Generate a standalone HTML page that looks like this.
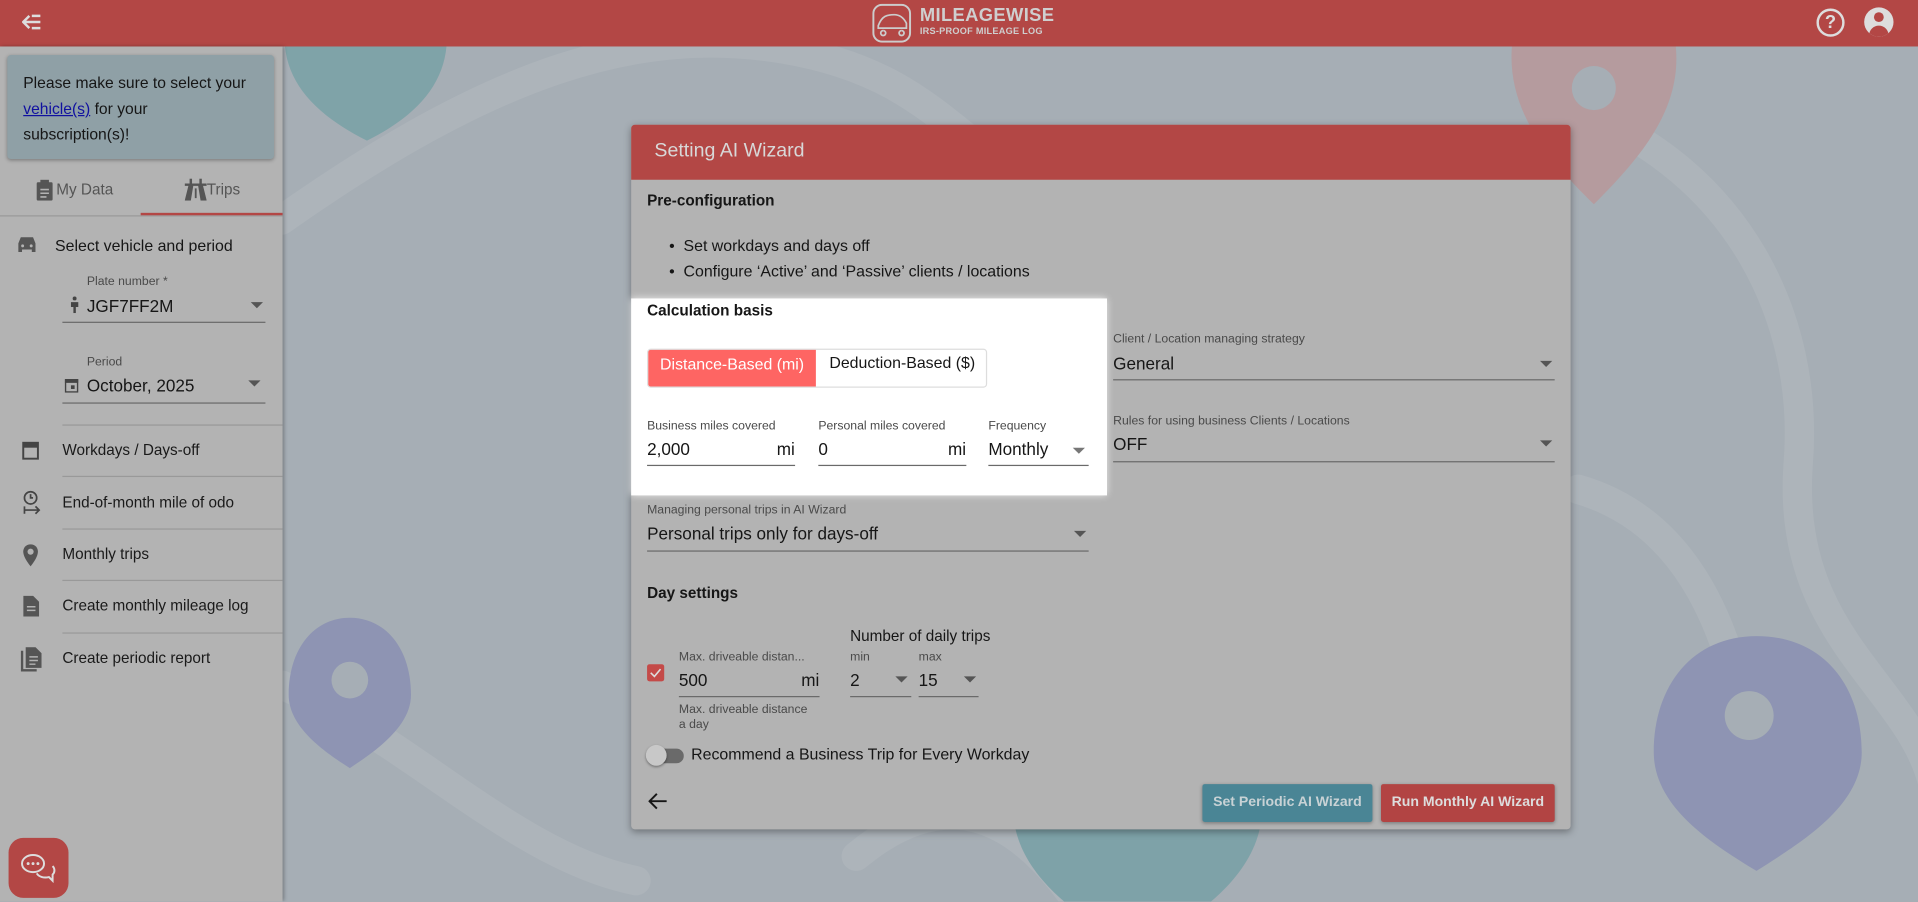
<!DOCTYPE html>
<html><head><meta charset="utf-8"><style>
*{box-sizing:border-box;margin:0;padding:0}
html,body{width:1918px;height:902px;overflow:hidden;background:#a6aeb5;font-family:"Liberation Sans",Arial,sans-serif}
#s{position:absolute;left:0;top:0;width:1568px;height:737px;transform:scale(1.22321);transform-origin:0 0;background:#a6aeb5;overflow:hidden}
.a{position:absolute}
.t{color:#161616}
.lbl{position:absolute;font-size:10px;color:#4a4a4a}
.val{position:absolute;font-size:14px;color:#161616}
.ul{position:absolute;height:1px;background:#6a6a6a}
.tri{position:absolute;width:0;height:0;border-left:5px solid transparent;border-right:5px solid transparent;border-top:5px solid #555}
.nav{position:absolute;left:0;width:231px;font-size:12.5px;color:#1a1a1a}
.sep{position:absolute;left:51px;width:180px;height:1px;background:#999}
</style></head><body><div id="s">
<svg class="a" style="left:0;top:0" width="1568" height="737">
<g fill="none" stroke="#adb4ba" stroke-width="24" stroke-linecap="round">
<path d="M230 180 C400 60 520 20 640 40 C760 60 780 120 860 160"/>
<path d="M1290 90 C1420 140 1480 260 1470 380 C1460 520 1560 560 1580 640"/>
<path d="M230 560 C330 600 420 700 520 720"/>
<path d="M700 700 C760 650 820 650 880 737"/>
<path d="M1290 400 C1360 420 1400 480 1420 560"/>
</g>
<path d="M233 38 L365 38 C362 70 340 95 300 115 C260 95 236 70 233 38Z" fill="#7fa3a8"/>
<path d="M1236 38 L1370 38 C1375 90 1340 130 1303 167 C1265 130 1232 90 1236 38Z" fill="#b59b9e"/>
<circle cx="1303" cy="72" r="18" fill="#a6aeb5"/>
<path d="M286 505 C315 505 336 530 336 568 C336 595 305 615 286 628 C266 615 236 595 236 568 C236 530 257 505 286 505Z" fill="#8e94b3"/>
<circle cx="286" cy="556" r="15" fill="#a6aeb5"/>
<path d="M1436 520 C1490 520 1522 560 1522 615 C1522 660 1470 690 1436 712 C1400 690 1352 660 1352 615 C1352 560 1384 520 1436 520Z" fill="#8e94b3"/>
<circle cx="1430" cy="585" r="20" fill="#a6aeb5"/>
<path d="M830 677 L1030 677 C1025 700 1010 720 990 737 L870 737 C850 720 835 700 830 677Z" fill="#7ea2a8"/>
</svg>
<div class="a" style="left:0;top:0;width:1568px;height:38px;background:#b34745"></div>
<svg class="a" style="left:18px;top:11px" width="18" height="14" viewBox="0 0 18 14"><path d="M6 2 L1 7 L6 12 M1 7 H15 M8 2H15 M8 12H15" stroke="#ddd" stroke-width="2" fill="none"/></svg>
<svg class="a" style="left:713px;top:3px" width="34" height="32" viewBox="0 0 34 32"><rect x="1" y="1" width="30" height="30" rx="7" fill="none" stroke="#ccc" stroke-width="1.6"/><path d="M5 18 C8 10 12 9 18 9 C23 9 26 12 28 16 L28 20 L5 20Z M9 22a2 2 0 1 0 .1 0 M24 22a2 2 0 1 0 .1 0" fill="none" stroke="#ccc" stroke-width="1.4"/></svg>
<div class="a" style="left:752px;top:4px;font-size:15px;font-weight:bold;color:#cfcfcf;letter-spacing:.3px">MILEAGEWISE</div>
<div class="a" style="left:752px;top:21px;font-size:7.5px;font-weight:bold;color:#cfcfcf;letter-spacing:.2px">IRS-PROOF MILEAGE LOG</div>
<div class="a" style="left:1485px;top:7px;width:23px;height:23px;border:2px solid #ddd;border-radius:50%;color:#ddd;font-size:15px;font-weight:bold;text-align:center;line-height:19px">?</div>
<div class="a" style="left:1524px;top:6px;width:24px;height:24px;border-radius:50%;background:#ddd;overflow:hidden"><div class="a" style="left:8px;top:4px;width:8px;height:8px;border-radius:50%;background:#b34745"></div><div class="a" style="left:4px;top:15px;width:16px;height:10px;border-radius:8px 8px 0 0;background:#b34745"></div></div>
<div class="a" style="left:0;top:38px;width:231px;height:699px;background:#b3b3b3;box-shadow:1px 0 3px rgba(0,0,0,.3)"></div>
<div class="a" style="left:6px;top:45px;width:218px;height:85px;background:#8fa0a6;border-radius:3px;box-shadow:0 1px 3px rgba(0,0,0,.3);padding:12px 13px;font-size:12.8px;line-height:21px;color:#161616;white-space:nowrap">Please make sure to select your<br><span style="color:#1010a0;text-decoration:underline">vehicle(s)</span> for your<br>subscription(s)!</div>
<div class="a" style="left:0;top:176px;width:231px;height:1px;background:#999"></div>
<div class="a" style="left:115px;top:174px;width:116px;height:2px;background:#b34745"></div>
<svg class="a" style="left:29px;top:146px" width="15" height="18"><rect x="1" y="3" width="13" height="15" rx="1" fill="#555"/><rect x="4" y="1" width="7" height="4" fill="#555"/><path d="M4 9h7M4 12h7M4 15h5" stroke="#b3b3b3" stroke-width="1.3"/></svg>
<div class="a" style="left:46px;top:148px;font-size:12.5px;color:#555">My Data</div>
<svg class="a" style="left:151px;top:146px" width="18" height="18"><path d="M4 0h2v4H4zM12 0h2v4h-2zM0 4h18v2H0zM3 6h4l-2 12H0zM11 6h4l3 12h-5z" fill="#555"/><path d="M9 8v8" stroke="#555" stroke-width="1.5"/></svg>
<div class="a" style="left:169px;top:148px;font-size:12.5px;color:#555">Trips</div>
<svg class="a" style="left:14px;top:193px" width="16" height="14"><path d="M3 1h10l2 5v7h-3v-2H4v2H1V6z" fill="#555"/><circle cx="4.5" cy="8" r="1.2" fill="#b3b3b3"/><circle cx="11.5" cy="8" r="1.2" fill="#b3b3b3"/></svg>
<div class="a t" style="left:45px;top:193px;font-size:13px">Select vehicle and period</div>
<div class="lbl" style="left:71px;top:225px">Plate number *</div>
<svg class="a" style="left:57px;top:242px" width="8" height="14"><circle cx="4" cy="2" r="1.6" fill="#444"/><path d="M1 5h6v4H5v5H3V9H1z" fill="#444"/></svg>
<div class="val" style="left:71px;top:242px">JGF7FF2M</div>
<div class="tri" style="left:205px;top:247px"></div>
<div class="ul" style="left:51px;top:263px;width:166px"></div>
<div class="lbl" style="left:71px;top:291px">Period</div>
<svg class="a" style="left:53px;top:309px" width="11" height="12"><rect x="0.5" y="1.5" width="10" height="10" fill="none" stroke="#444" stroke-width="1.3"/><rect x="0" y="1" width="11" height="3" fill="#444"/><rect x="5" y="6" width="3" height="3" fill="#444"/></svg>
<div class="val" style="left:71px;top:307px">October, 2025</div>
<div class="tri" style="left:203px;top:311px"></div>
<div class="ul" style="left:51px;top:329px;width:166px"></div>
<div class="sep" style="top:347px"></div>
<svg class="a" style="left:18px;top:360px" width="14" height="16"><rect x="1" y="2" width="12" height="13" fill="none" stroke="#444" stroke-width="1.6"/><rect x="1" y="2" width="12" height="4" fill="#444"/></svg>
<div class="nav" style="left:51px;top:361px">Workdays / Days-off</div>
<div class="sep" style="top:389px"></div>
<svg class="a" style="left:17px;top:401px" width="18" height="20"><circle cx="8" cy="6" r="5" fill="none" stroke="#444" stroke-width="1.4"/><path d="M8 3v3h2M3 13v6M3 16h12M12 13l3 3-3 3" stroke="#444" stroke-width="1.4" fill="none"/></svg>
<div class="nav" style="left:51px;top:404px">End-of-month mile of odo</div>
<div class="sep" style="top:432px"></div>
<svg class="a" style="left:18px;top:444px" width="14" height="20"><path d="M7 1C3 1 1 4 1 7c0 5 6 12 6 12s6-7 6-12c0-3-2-6-6-6z" fill="#555"/><circle cx="7" cy="7" r="2.5" fill="#b3b3b3"/></svg>
<div class="nav" style="left:51px;top:446px">Monthly trips</div>
<div class="sep" style="top:474px"></div>
<svg class="a" style="left:19px;top:487px" width="13" height="17"><path d="M0 0h8l5 5v12H0z" fill="#555"/><path d="M3 9h7M3 12h7" stroke="#b3b3b3" stroke-width="1.2"/></svg>
<div class="nav" style="left:51px;top:488px">Create monthly mileage log</div>
<div class="sep" style="top:517px"></div>
<svg class="a" style="left:17px;top:529px" width="17" height="20"><path d="M0 3v17h13v-2H2V3z" fill="#555"/><path d="M4 0h8l5 5v12H4z" fill="#555"/><path d="M7 8h7M7 11h7M7 14h5" stroke="#b3b3b3" stroke-width="1.2"/></svg>
<div class="nav" style="left:51px;top:531px">Create periodic report</div>
<div class="a" style="left:7px;top:685px;width:49px;height:49px;border-radius:12px;background:#b34745"></div>
<svg class="a" style="left:16px;top:696px" width="30" height="26"><ellipse cx="11" cy="10" rx="9" ry="7" fill="none" stroke="#ddd" stroke-width="1.6"/><path d="M14 18c2 3 6 4 10 3l3 3v-5c2-2 2-5 0-7" fill="none" stroke="#ddd" stroke-width="1.6"/><circle cx="7" cy="10" r="1.2" fill="#ddd"/><circle cx="11" cy="10" r="1.2" fill="#ddd"/><circle cx="15" cy="10" r="1.2" fill="#ddd"/></svg>
<div class="a" style="left:516px;top:102px;width:768px;height:576px;background:#b3b3b3;border-radius:3px;box-shadow:0 2px 6px rgba(0,0,0,.35)"></div>
<div class="a" style="left:516px;top:102px;width:768px;height:45px;background:#b34745;border-radius:3px 3px 0 0"></div>
<div class="a" style="left:535px;top:115px;font-size:16px;color:#d8d8d8">Setting AI Wizard</div>
<div class="a t" style="left:529px;top:157px;font-size:12.5px;font-weight:bold">Pre-configuration</div>
<div class="a t" style="left:547px;top:191px;font-size:13px;line-height:20.5px">•&nbsp; Set workdays and days off<br>•&nbsp; Configure ‘Active’ and ‘Passive’ clients / locations</div>
<div class="a" style="left:516px;top:244px;width:389px;height:161px;background:#fff;box-shadow:0 0 6px rgba(255,255,255,.8)"></div>
<div class="a t" style="left:529px;top:247px;font-size:12.5px;font-weight:bold">Calculation basis</div>
<div class="a" style="left:529px;top:285px;width:278px;height:32px;border:1px solid #ddd;border-radius:3px;background:#fff"></div>
<div class="a" style="left:530px;top:286px;width:137px;height:30px;background:#fe6563;border-radius:2px 0 0 2px;color:#fff;font-size:13px;line-height:24px;text-align:center">Distance-Based (mi)</div>
<div class="a t" style="left:678px;top:289px;font-size:13px">Deduction-Based ($)</div>
<div class="lbl" style="left:529px;top:343px">Business miles covered</div>
<div class="val" style="left:529px;top:359px">2,000</div><div class="val" style="left:635px;top:359px">mi</div>
<div class="ul" style="left:529px;top:380px;width:121px"></div>
<div class="lbl" style="left:669px;top:343px">Personal miles covered</div>
<div class="val" style="left:669px;top:359px">0</div><div class="val" style="left:775px;top:359px">mi</div>
<div class="ul" style="left:669px;top:380px;width:121px"></div>
<div class="lbl" style="left:808px;top:343px">Frequency</div>
<div class="val" style="left:808px;top:359px">Monthly</div>
<div class="tri" style="left:877px;top:366px;border-top-color:#777"></div>
<div class="ul" style="left:808px;top:380px;width:82px"></div>
<div class="lbl" style="left:910px;top:272px">Client / Location managing strategy</div>
<div class="val" style="left:910px;top:289px">General</div>
<div class="tri" style="left:1259px;top:295px"></div>
<div class="ul" style="left:910px;top:310px;width:361px"></div>
<div class="lbl" style="left:910px;top:339px">Rules for using business Clients / Locations</div>
<div class="val" style="left:910px;top:355px">OFF</div>
<div class="tri" style="left:1259px;top:360px"></div>
<div class="ul" style="left:910px;top:377px;width:361px"></div>
<div class="lbl" style="left:529px;top:412px">Managing personal trips in AI Wizard</div>
<div class="val" style="left:529px;top:428px">Personal trips only for days-off</div>
<div class="tri" style="left:878px;top:434px"></div>
<div class="ul" style="left:529px;top:450px;width:361px"></div>
<div class="a t" style="left:529px;top:478px;font-size:12.5px;font-weight:bold">Day settings</div>
<div class="a t" style="left:695px;top:513px;font-size:12.5px">Number of daily trips</div>
<div class="a" style="left:529px;top:543px;width:14px;height:14px;background:#c44a48;border-radius:2px"></div>
<svg class="a" style="left:531px;top:545px" width="10" height="10"><path d="M1 5l3 3 5-6" stroke="#ddd" stroke-width="1.3" fill="none"/></svg>
<div class="lbl" style="left:555px;top:532px">Max. driveable distan...</div>
<div class="val" style="left:555px;top:548px">500</div><div class="val" style="left:655px;top:548px">mi</div>
<div class="ul" style="left:555px;top:569px;width:115px"></div>
<div class="lbl" style="left:555px;top:575px;line-height:12px">Max. driveable distance<br>a day</div>
<div class="lbl" style="left:695px;top:532px">min</div>
<div class="val" style="left:695px;top:548px">2</div><div class="tri" style="left:732px;top:553px"></div>
<div class="ul" style="left:695px;top:569px;width:50px"></div>
<div class="lbl" style="left:751px;top:532px">max</div>
<div class="val" style="left:751px;top:548px">15</div><div class="tri" style="left:788px;top:553px"></div>
<div class="ul" style="left:751px;top:569px;width:49px"></div>
<div class="a" style="left:531px;top:612px;width:28px;height:12px;border-radius:6px;background:#6a6a6a"></div>
<div class="a" style="left:528px;top:609px;width:17px;height:17px;border-radius:50%;background:#c8c8c8;box-shadow:0 1px 2px rgba(0,0,0,.4)"></div>
<div class="a t" style="left:565px;top:609px;font-size:13px">Recommend a Business Trip for Every Workday</div>
<svg class="a" style="left:530px;top:648px" width="16" height="14"><path d="M7 1L1 7l6 6M1 7h14" stroke="#161616" stroke-width="1.6" fill="none"/></svg>
<div class="a" style="left:983px;top:641px;width:139px;height:31px;background:#4a8595;border-radius:2px;color:#c8d2d5;font-size:11.5px;font-weight:bold;text-align:center;line-height:31px;box-shadow:0 1px 3px rgba(0,0,0,.3)">Set Periodic AI Wizard</div>
<div class="a" style="left:1129px;top:641px;width:142px;height:31px;background:#b24443;border-radius:2px;color:#ddd;font-size:11.5px;font-weight:bold;text-align:center;line-height:31px;box-shadow:0 1px 3px rgba(0,0,0,.3)">Run Monthly AI Wizard</div>
</div></body></html>
